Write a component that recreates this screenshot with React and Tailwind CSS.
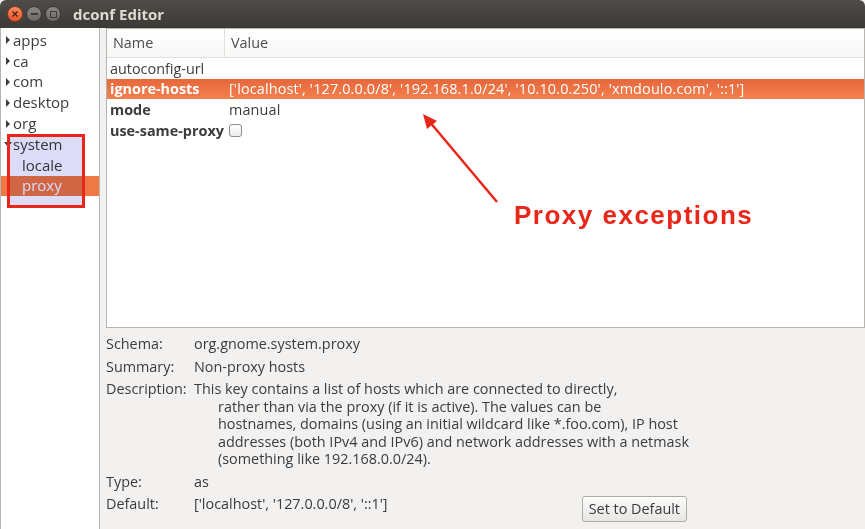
import React from "react";

const tree = [
  { label: "apps", depth: 0, arrow: "right" },
  { label: "ca", depth: 0, arrow: "right" },
  { label: "com", depth: 0, arrow: "right" },
  { label: "desktop", depth: 0, arrow: "right" },
  { label: "org", depth: 0, arrow: "right" },
  { label: "system", depth: 0, arrow: "down" },
  { label: "locale", depth: 1 },
  { label: "proxy", depth: 1, selected: true },
];

const keys = [
  { name: "autoconfig-url", value: "", bold: false },
  {
    name: "ignore-hosts",
    value: "['localhost', '127.0.0.0/8', '192.168.1.0/24', '10.10.0.250', 'xmdoulo.com', '::1']",
    bold: true,
    selected: true,
  },
  { name: "mode", value: "manual", bold: true },
  { name: "use-same-proxy", check: true, bold: true },
];

const description = [
  "This key contains a list of hosts which are connected to directly,",
  "rather than via the proxy (if it is active). The values can be",
  "hostnames, domains (using an initial wildcard like *.foo.com), IP host",
  "addresses (both IPv4 and IPv6) and network addresses with a netmask",
  "(something like 192.168.0.0/24).",
];

function Arrow({ dir }) {
  if (dir === "down") {
    return (
      <svg width="8" height="8" viewBox="0 0 8 8" className="shrink-0">
        <path d="M0 2 L8 2 L4 7 Z" fill="#3c3c3c" />
      </svg>
    );
  }
  return (
    <svg width="8" height="8" viewBox="0 0 8 8" className="shrink-0">
      <path d="M2 0 L6 4 L2 8 Z" fill="#3c3c3c" />
    </svg>
  );
}

function TitleBar() {
  return (
    <div className="flex h-[28px] items-center rounded-t-[6px] bg-gradient-to-b from-[#4d4c47] to-[#3b3a36] pl-[7px]">
      <div className="flex items-center gap-[3px]">
        <div className="flex h-[16px] w-[16px] items-center justify-center rounded-full border border-[#8c3a1d] bg-gradient-to-b from-[#f78a5d] to-[#e8542a]">
          <svg width="6" height="6" viewBox="0 0 6 6">
            <path d="M0.5 0.5 L5.5 5.5 M5.5 0.5 L0.5 5.5" stroke="#4a2012" strokeWidth="1.3" />
          </svg>
        </div>
        <div className="flex h-[16px] w-[16px] items-center justify-center rounded-full border border-[#3a3935] bg-gradient-to-b from-[#8a8983] to-[#6a6964]">
          <div className="h-[1.5px] w-[7px] bg-[#3c3b37]" />
        </div>
        <div className="flex h-[16px] w-[16px] items-center justify-center rounded-full border border-[#3a3935] bg-gradient-to-b from-[#8a8983] to-[#6a6964]">
          <div className="h-[7px] w-[7px] border border-[#3c3b37]" />
        </div>
      </div>
      <div className="ml-[12px] text-[15px] font-bold text-[#dfdbd2]">dconf Editor</div>
    </div>
  );
}

function TreePane() {
  return (
    <div className="w-[100px] shrink-0 border-x border-[#b6b4ae] bg-white pt-[2px]">
      {tree.map((t) => (
        <div
          key={t.label}
          className={`flex h-[20.8px] items-center text-[15px] leading-none ${
            t.selected ? "bg-[#f07746] text-white" : "text-[#3c3c3c]"
          }`}
        >
          <div className="flex w-[12px] justify-center pl-[1px]">{t.arrow && <Arrow dir={t.arrow} />}</div>
          <span className={t.depth ? "pl-[9px]" : ""}>{t.label}</span>
        </div>
      ))}
    </div>
  );
}

function KeyTable() {
  return (
    <div className="h-[300px] border border-[#b6b4ae] bg-white">
      <div className="flex h-[29px] border-b border-[#e2e0db] bg-gradient-to-b from-white to-[#f7f7f6] text-[14.4px] text-[#4c4c4c]">
        <div className="flex w-[118px] items-center border-r border-[#e2e0db] pl-[6px]">Name</div>
        <div className="flex items-center pl-[6px]">Value</div>
      </div>
      {keys.map((k) => (
        <div
          key={k.name}
          className={`flex h-[20.7px] items-center text-[14.4px] ${
            k.selected ? "bg-gradient-to-b from-[#e6673b] to-[#f3804f] text-white" : "text-[#3c3c3c]"
          }`}
        >
          <div className={`w-[118px] shrink-0 pl-[3px] ${k.bold ? "font-bold" : ""}`}>{k.name}</div>
          <div className="whitespace-nowrap pl-[4px] tracking-[0.15px]">
            {k.check ? (
              <div className="h-[13px] w-[13px] rounded-[3px] border border-[#8f8d87] bg-gradient-to-b from-white to-[#ecebe9]" />
            ) : (
              k.value
            )}
          </div>
        </div>
      ))}
    </div>
  );
}

function InfoPane() {
  return (
    <div className="grid grid-cols-[88px_493px] gap-y-[5px] pt-[7px] text-[14.4px] leading-[17.5px] text-[#3c3c3c]">
      <div>Schema:</div>
      <div>org.gnome.system.proxy</div>
      <div>Summary:</div>
      <div>Non-proxy hosts</div>
      <div>Description:</div>
      <div className="whitespace-nowrap">
        {description.map((line, i) => (
          <div key={i} className={i ? "pl-[24px]" : ""}>
            {line}
          </div>
        ))}
      </div>
      <div>Type:</div>
      <div>as</div>
      <div>Default:</div>
      <div className="flex items-start justify-between">
        <span>['localhost', '127.0.0.0/8', '::1']</span>
        <button className="mt-[1px] h-[26px] rounded-[3px] border border-[#aeaca6] bg-gradient-to-b from-[#fbfbfa] to-[#e8e7e4] px-[6px] text-[14.4px] text-[#3c3c3c] shadow-[inset_0_1px_0_white]">
          Set to Default
        </button>
      </div>
    </div>
  );
}

export default function App() {
  return (
    <div className="relative h-[529px] w-[865px] overflow-hidden bg-[#f2f1f0] font-['Open_Sans','Noto_Sans',sans-serif]">
      <TitleBar />
      <div className="flex h-[501px]">
        <TreePane />
        <div className="flex-1 pl-[6px]">
          <KeyTable />
          <InfoPane />
        </div>
      </div>

      {/* annotation: red box round system/locale/proxy */}
      <div className="absolute left-[7px] top-[134px] h-[74px] w-[78px] bg-[#dcdcf8] mix-blend-multiply" />
      <div className="absolute left-[7px] top-[134px] h-[74px] w-[78px] border-[3px] border-[#e8261a]" />

      {/* annotation: arrow and label */}
      <svg className="absolute left-0 top-0" width="865" height="529" viewBox="0 0 865 529">
        <line x1="497" y1="202" x2="429" y2="121" stroke="#e8261a" strokeWidth="2.5" />
        <path d="M423 114 L437 121 L427 129 Z" fill="#e8261a" />
      </svg>
      <div className="absolute left-[514px] top-[202px] font-['Liberation_Sans',Arial,sans-serif] text-[26px] font-bold leading-none tracking-[1.5px] text-[#e8261a]">
        Proxy exceptions
      </div>
    </div>
  );
}
